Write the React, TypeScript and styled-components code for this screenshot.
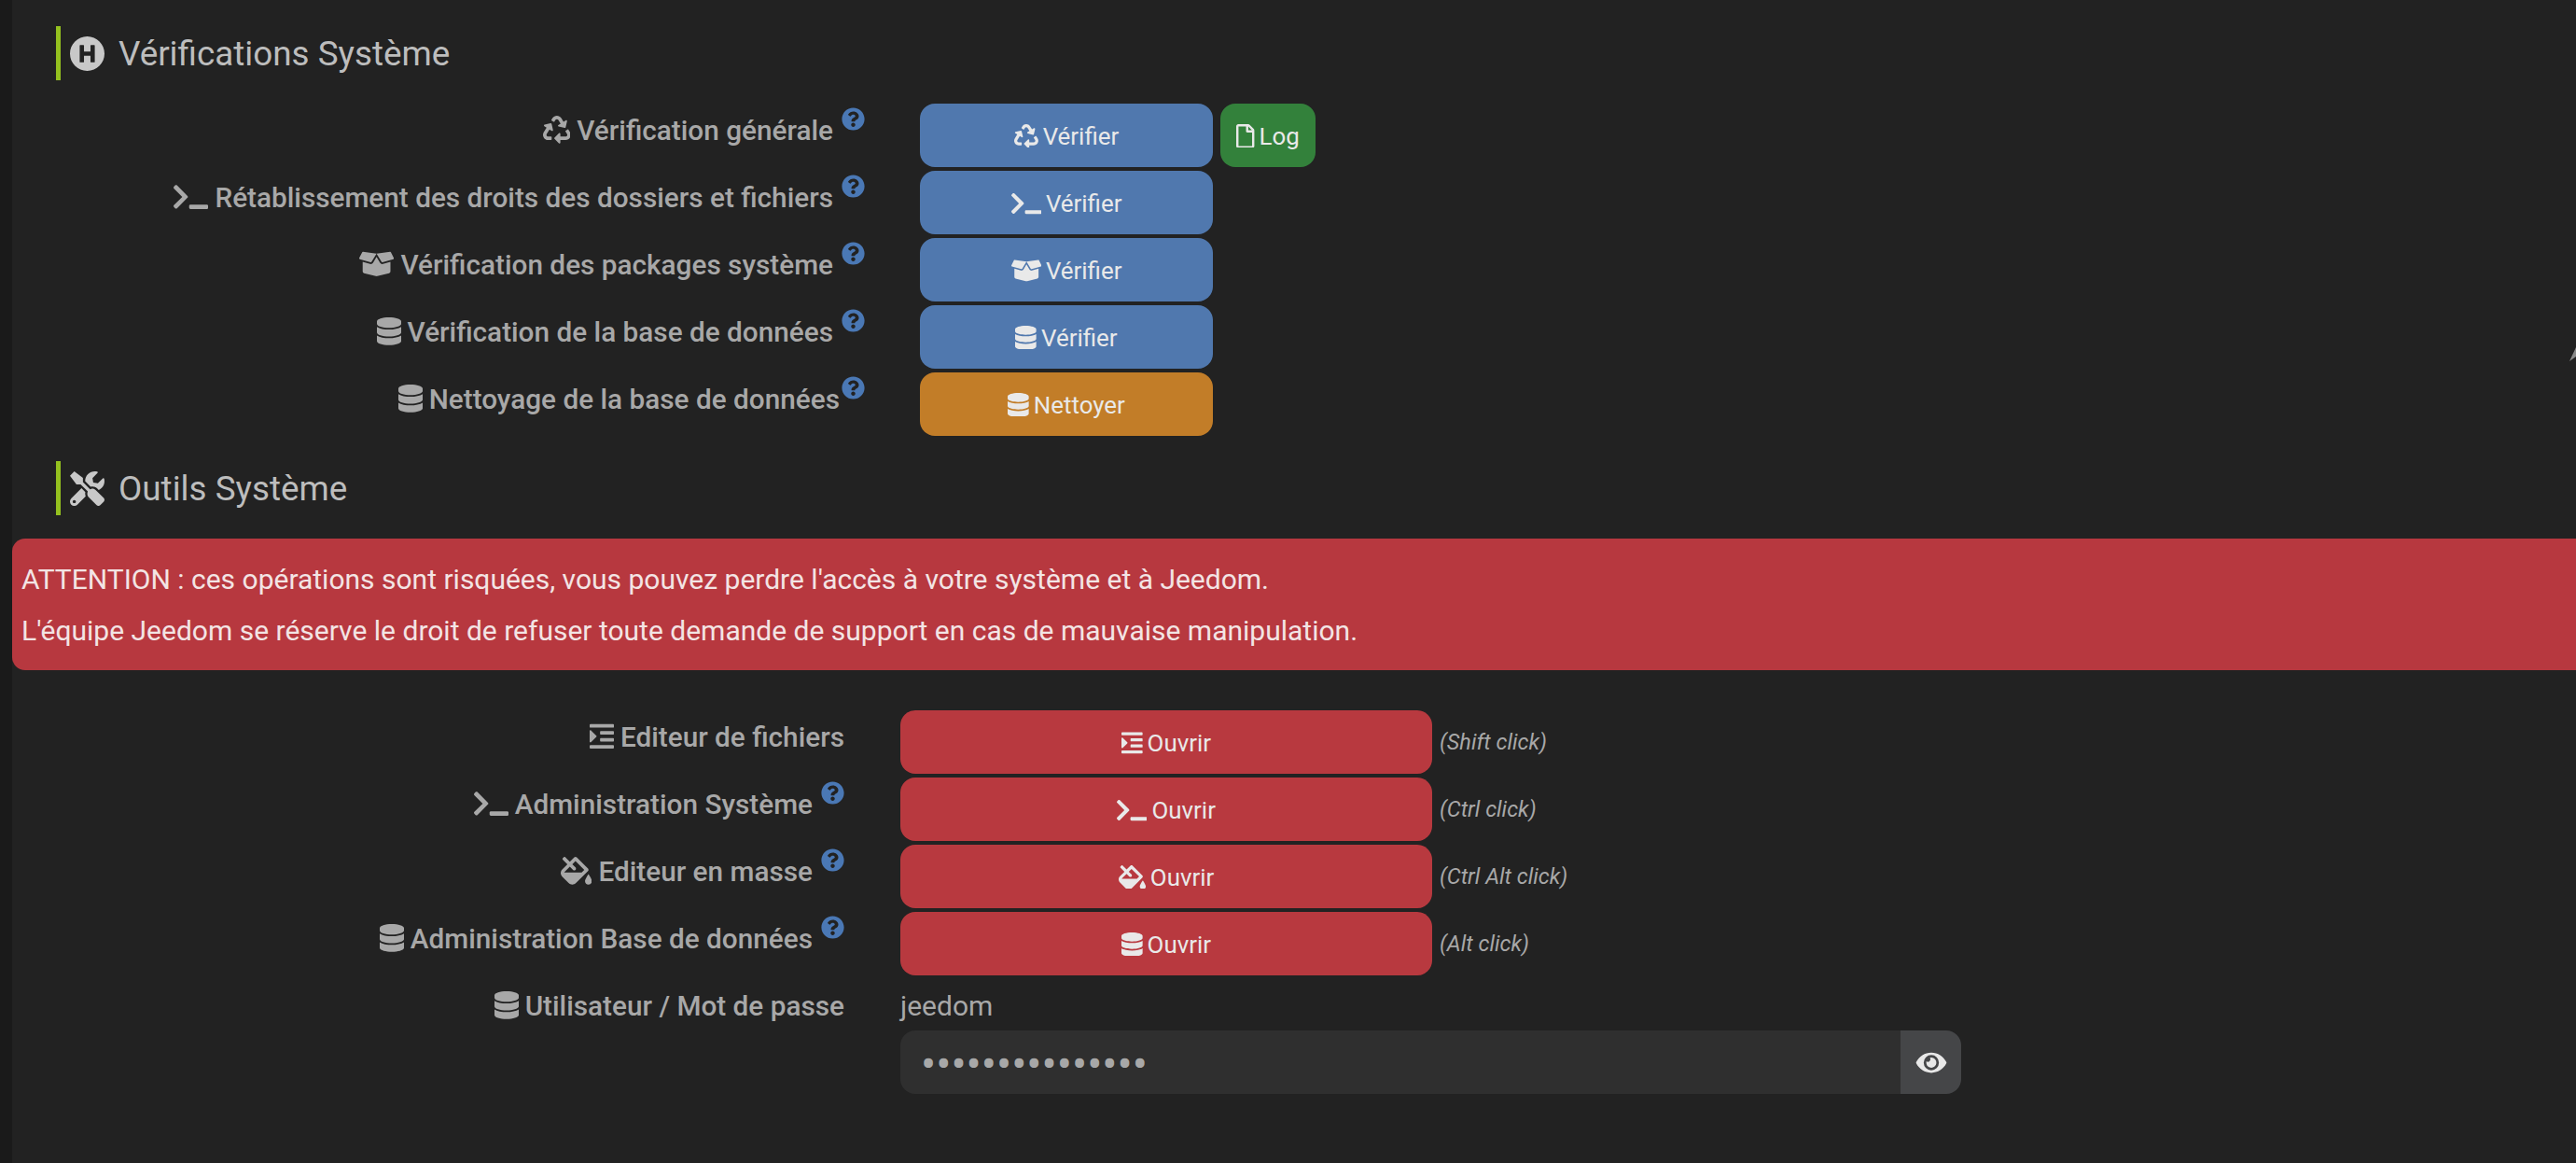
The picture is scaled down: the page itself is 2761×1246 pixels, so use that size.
import React from 'react';
import styled, { createGlobalStyle } from 'styled-components';
import {
  FaBoxOpen,
  FaDatabase,
  FaEye,
  FaFillDrip,
  FaHospitalSymbol,
  FaIndent,
  FaQuestionCircle,
  FaRecycle,
  FaRegFile,
  FaTerminal,
  FaTools,
} from 'react-icons/fa';

const GlobalStyle = createGlobalStyle`
  html, body {
    margin: 0;
    height: 100%;
    background: #222222;
    overflow: hidden;
  }
  * { box-sizing: border-box; }
`;

const Page = styled.div`
  display: flex;
  height: 1246px;
  position: relative;
  overflow: hidden;
  font-family: Roboto, 'Noto Sans', sans-serif;
  background: #222222;
`;

const Gutter = styled.div`
  flex: 0 0 13px;
  background: #1a1a1a;
`;

const Main = styled.main`
  flex: 1;
  min-width: 0;
  padding-top: 28px;
`;

const SectionTitle = styled.h2`
  display: flex;
  align-items: center;
  gap: 15px;
  height: 58px;
  margin: 0 0 25px 47px;
  padding-left: 10px;
  border-left: 5px solid #94c11f;
  color: #bdbdbd;
  font-size: 36.8px;
  font-weight: 400;
  svg {
    width: 37px;
    height: 37px;
    color: #c8c8c8;
    flex: none;
  }
`;

const Section2Title = styled(SectionTitle)`
  margin-top: 27px;
`;

const Rows = styled.div`
  display: flex;
  flex-direction: column;
  gap: 4px;
`;

const Row = styled.div<{ $labelWidth: number; $gap: number }>`
  display: grid;
  grid-template-columns: ${({ $labelWidth }) => $labelWidth}px 1fr;
  column-gap: ${({ $gap }) => $gap}px;
  align-items: start;
`;

// react-icons forces a 1em square, so the slot carries the glyph's real ratio
const IconSlot = styled.span<{ $ratio: number }>`
  display: inline-flex;
  flex: none;
  height: 1em;
  width: ${({ $ratio }) => $ratio}em;
  svg {
    width: 100%;
    height: 100%;
  }
`;

const Label = styled.div`
  text-align: right;
  height: 60px;
  line-height: 58px;
  font-size: 29.75px;
  font-weight: 500;
  color: #a8a8a8;
  white-space: nowrap;
  ${IconSlot} {
    vertical-align: -4px;
    margin-right: 7px;
  }
`;

const Help = styled(FaQuestionCircle)`
  width: 25px;
  height: 25px;
  margin-left: 9px;
  color: #4a78b5;
  vertical-align: 10px;
`;

const TightHelp = styled(Help)`
  margin-left: 2px;
`;

const Controls = styled.div`
  display: flex;
  align-items: center;
  gap: 8px;
`;

const tones = {
  blue: '#5078ae',
  orange: '#c27d28',
  green: '#33813b',
  red: '#b8393f',
};

const Button = styled.button<{ $tone: keyof typeof tones; $width: number }>`
  display: flex;
  align-items: center;
  justify-content: center;
  gap: 5px;
  width: ${({ $width }) => $width}px;
  height: 68px;
  padding: 1px 0 0;
  border: 0;
  border-radius: 16px;
  background: ${({ $tone }) => tones[$tone]};
  color: #e9e9e9;
  font-family: inherit;
  font-size: 25.9px;
`;

const Hint = styled.span`
  color: #a8a8a8;
  font-size: 23.5px;
  font-style: italic;
`;

const Alert = styled.div`
  margin: 0 0 43px;
  height: 141px;
  padding: 16px 10px;
  border-radius: 14px 0 0 14px;
  background: #b7383f;
  color: #f3e4e4;
  font-size: 30px;
  line-height: 55px;
`;

const Credentials = styled.div`
  display: flex;
  flex-direction: column;
`;

const UserName = styled.div`
  height: 55px;
  line-height: 58px;
  font-size: 30px;
  color: #a8a8a8;
`;

const PasswordGroup = styled.div`
  display: flex;
  width: 1137px;
  height: 68px;
`;

const PasswordInput = styled.input`
  flex: 1;
  min-width: 0;
  padding: 5px 22px 0;
  border: 0;
  border-radius: 16px 0 0 16px;
  background: #2f2f2f;
  color: #a8a8a8;
  font-family: inherit;
  font-size: 48px;
  outline: none;
`;

const EyeAddon = styled.div`
  flex: 0 0 65px;
  display: flex;
  align-items: center;
  justify-content: center;
  border-radius: 0 16px 16px 0;
  background: #454648;
  color: #e8e8e8;
  svg {
    width: 36px;
    height: 29px;
  }
`;

const EdgeMark = styled.svg`
  position: absolute;
  top: 370px;
  right: 0;
  width: 10px;
  height: 20px;
`;

const RECYCLE = { node: <FaRecycle />, ratio: 1 };
const TERMINAL = { node: <FaTerminal />, ratio: 1.25 };
const BOX = { node: <FaBoxOpen />, ratio: 1.25 };
const DATABASE = { node: <FaDatabase />, ratio: 0.875 };
const INDENT = { node: <FaIndent />, ratio: 0.875 };
const FILL = { node: <FaFillDrip />, ratio: 1.125 };

const checks = [
  { icon: RECYCLE, text: 'Vérification générale', action: 'Vérifier', tone: 'blue', log: true },
  { icon: TERMINAL, text: 'Rétablissement des droits des dossiers et fichiers', action: 'Vérifier', tone: 'blue' },
  { icon: BOX, text: 'Vérification des packages système', action: 'Vérifier', tone: 'blue' },
  { icon: DATABASE, text: 'Vérification de la base de données', action: 'Vérifier', tone: 'blue' },
  { icon: DATABASE, text: 'Nettoyage de la base de données', action: 'Nettoyer', tone: 'orange', tight: true },
] as const;

const tools = [
  { icon: INDENT, text: 'Editeur de fichiers', hint: '(Shift click)', noHelp: true },
  { icon: TERMINAL, text: 'Administration Système', hint: '(Ctrl click)' },
  { icon: FILL, text: 'Editeur en masse', hint: '(Ctrl Alt click)' },
  { icon: DATABASE, text: 'Administration Base de données', hint: '(Alt click)' },
];

export default function App() {
  return (
    <Page>
      <GlobalStyle />
      <Gutter />
      <Main>
        <SectionTitle>
          <FaHospitalSymbol />
          Vérifications Système
        </SectionTitle>
        <Rows>
          {checks.map((row) => (
            <Row key={row.text} $labelWidth={914} $gap={59}>
              <Label>
                <IconSlot $ratio={row.icon.ratio}>{row.icon.node}</IconSlot>
                {row.text}
                {'tight' in row ? <TightHelp /> : <Help />}
              </Label>
              <Controls>
                <Button $tone={row.tone} $width={314}>
                  <IconSlot $ratio={row.icon.ratio}>{row.icon.node}</IconSlot>
                  {row.action}
                </Button>
                {'log' in row && (
                  <Button $tone="green" $width={102}>
                    <IconSlot $ratio={0.75}>
                      <FaRegFile />
                    </IconSlot>
                    Log
                  </Button>
                )}
              </Controls>
            </Row>
          ))}
        </Rows>

        <Section2Title>
          <FaTools />
          Outils Système
        </Section2Title>
        <Alert>
          ATTENTION : ces opérations sont risquées, vous pouvez perdre l'accès à votre système et à Jeedom.
          <br />
          L'équipe Jeedom se réserve le droit de refuser toute demande de support en cas de mauvaise manipulation.
        </Alert>

        <Rows>
          {tools.map((row) => (
            <Row key={row.text} $labelWidth={892} $gap={60}>
              <Label>
                <IconSlot $ratio={row.icon.ratio}>{row.icon.node}</IconSlot>
                {row.text}
                {!row.noHelp && <Help />}
              </Label>
              <Controls>
                <Button $tone="red" $width={570}>
                  <IconSlot $ratio={row.icon.ratio}>{row.icon.node}</IconSlot>
                  Ouvrir
                </Button>
                <Hint>{row.hint}</Hint>
              </Controls>
            </Row>
          ))}
          <Row $labelWidth={892} $gap={60}>
            <Label>
              <IconSlot $ratio={DATABASE.ratio}>{DATABASE.node}</IconSlot>
              Utilisateur / Mot de passe
            </Label>
            <Credentials>
              <UserName>jeedom</UserName>
              <PasswordGroup>
                <PasswordInput type="password" defaultValue="123456789012345" readOnly />
                <EyeAddon>
                  <FaEye />
                </EyeAddon>
              </PasswordGroup>
            </Credentials>
          </Row>
        </Rows>
      </Main>
      <EdgeMark viewBox="0 0 10 20">
        <path d="M10 2 L10 12 L3 17 Z" fill="#8a8a8a" />
      </EdgeMark>
    </Page>
  );
}
